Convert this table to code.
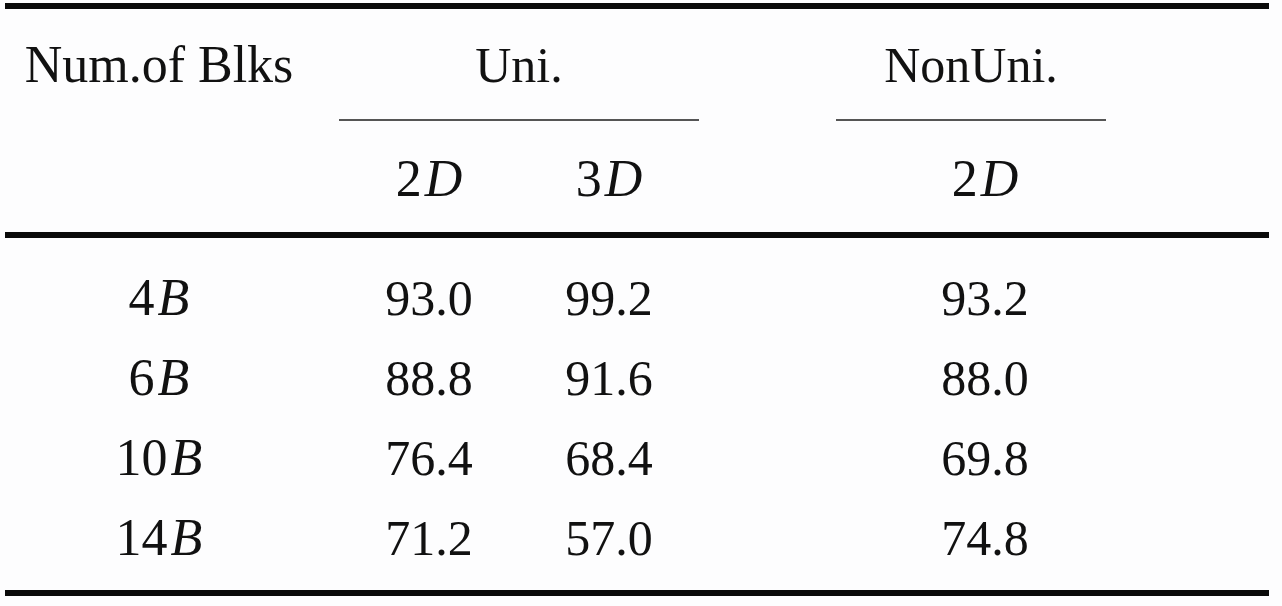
import React from "react";

const cols = "grid grid-cols-[308px_26px_180px_180px_137px_270px_1fr]";
const serif = { fontFamily: '"Liberation Serif", "Times New Roman", serif' };

function Math({ n, v }: { n: string; v: string }) {
  return (
    <div className="text-[52px] leading-[80px]">
      {n}
      <span className="italic ml-[3px]">{v}</span>
    </div>
  );
}

const rows = [
  { n: "4", a: "93.0", b: "99.2", c: "93.2" },
  { n: "6", a: "88.8", b: "91.6", c: "88.0" },
  { n: "10", a: "76.4", b: "68.4", c: "69.8" },
  { n: "14", a: "71.2", b: "57.0", c: "74.8" },
];

function Rule({ className }: { className: string }) {
  return <div className={"bg-[#0a0a0a] h-[6px] " + className}></div>;
}

export default function App() {
  return (
    <div
      className="w-[1282px] h-[606px] bg-[#fdfdfe] text-[#111] px-[5px] pr-[13px] pt-[3px] overflow-hidden"
      style={serif}
    >
      <Rule className="" />

      {/* header row 1 */}
      <div className={cols + " mt-[16px] text-[50px] leading-[80px] text-center"}>
        <div className="text-[52px]">Num.of Blks</div>
        <div></div>
        <div className="col-span-2">Uni.</div>
        <div></div>
        <div>NonUni.</div>
        <div></div>
      </div>

      {/* cmidrules */}
      <div className={cols + " mt-[14px]"}>
        <div></div>
        <div></div>
        <div className="col-span-2 h-[2px] bg-[#555]"></div>
        <div></div>
        <div className="h-[2px] bg-[#555]"></div>
        <div></div>
      </div>

      {/* header row 2 */}
      <div className={cols + " mt-[18px] text-[52px] leading-[80px] text-center"}>
        <div></div>
        <div></div>
        <Math n="2" v="D" />
        <Math n="3" v="D" />
        <div></div>
        <div className="pl-[28px]">
          <Math n="2" v="D" />
        </div>
        <div></div>
      </div>

      <Rule className="mt-[13px]" />

      <div className="mt-[20px]">
        {rows.map((r) => (
          <div key={r.n} className={cols + " text-[50px] leading-[80px] text-center"}>
            <Math n={r.n} v="B" />
            <div></div>
            <div>{r.a}</div>
            <div>{r.b}</div>
            <div></div>
            <div className="pl-[28px]">{r.c}</div>
            <div></div>
          </div>
        ))}
      </div>

      <Rule className="mt-[12px]" />
    </div>
  );
}
